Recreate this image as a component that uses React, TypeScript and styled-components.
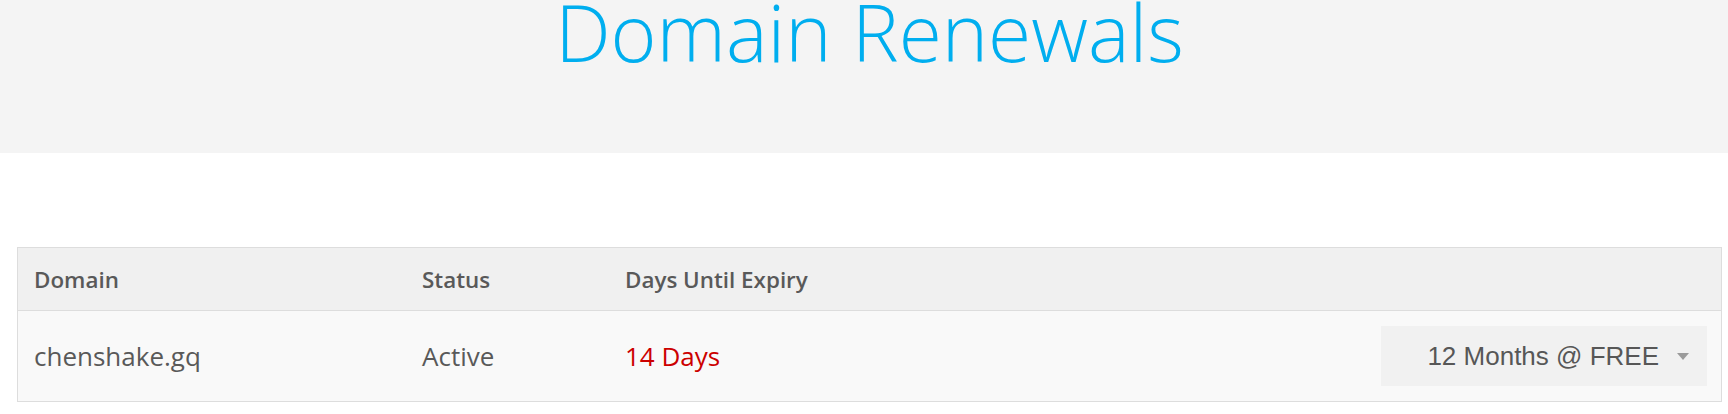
import React from "react";
import styled, { createGlobalStyle } from "styled-components";

const GlobalStyle = createGlobalStyle`
  html, body {
    margin: 0;
    padding: 0;
    background: #ffffff;
  }

  body {
    font-family: "Open Sans", "Liberation Sans", sans-serif;
    color: #595959;
  }
`;

const Banner = styled.header`
  height: 153px;
  background: #f4f4f4;
  padding: 0 6px 0 17px;
`;

const Title = styled.h1`
  margin: 0;
  text-align: center;
  font-size: 78.5px;
  font-weight: 300;
  line-height: 63px;
  color: #00aeef;
`;

const Content = styled.main`
  padding: 94px 6px 0 17px;
`;

const Table = styled.div`
  border: 1px solid #dddddd;
`;

const Row = styled.div<{ $head?: boolean }>`
  display: grid;
  grid-template-columns: 388px 203px 1fr auto;
  align-items: center;
  height: ${(p) => (p.$head ? "62px" : "90px")};
  background: ${(p) => (p.$head ? "#f0f0f0" : "#f9f9f9")};
  border-bottom: ${(p) => (p.$head ? "1px solid #dddddd" : "none")};
`;

const Cell = styled.div<{ $head?: boolean; $tone?: string }>`
  padding: 0 16px;
  font-size: ${(p) => (p.$head ? "22.4px" : "26px")};
  font-weight: ${(p) => (p.$head ? 600 : 400)};
  color: ${(p) => p.$tone ?? "#595959"};
  white-space: nowrap;
`;

const Select = styled.div`
  display: flex;
  align-items: center;
  justify-content: flex-end;
  gap: 18px;
  width: 326px;
  height: 60px;
  box-sizing: border-box;
  margin-right: 14px;
  padding-right: 18px;
  background: #f1f1f1;
  font-family: "Liberation Sans", Arial, sans-serif;
  font-size: 26px;
  color: #575757;
`;

const Caret = () => (
  <svg width="12" height="7" viewBox="0 0 12 7" aria-hidden="true">
    <path d="M0 0h12L6 7z" fill="#9b9b9b" />
  </svg>
);

export default function App() {
  return (
    <>
      <GlobalStyle />
      <Banner>
        <Title>Domain Renewals</Title>
      </Banner>
      <Content>
        <Table>
          <Row $head>
            <Cell $head>Domain</Cell>
            <Cell $head>Status</Cell>
            <Cell $head>Days Until Expiry</Cell>
            <div />
          </Row>
          <Row>
            <Cell>chenshake.gq</Cell>
            <Cell>Active</Cell>
            <Cell $tone="#cc0000">14 Days</Cell>
            <Select>
              <span>12 Months @ FREE</span>
              <Caret />
            </Select>
          </Row>
        </Table>
      </Content>
    </>
  );
}
